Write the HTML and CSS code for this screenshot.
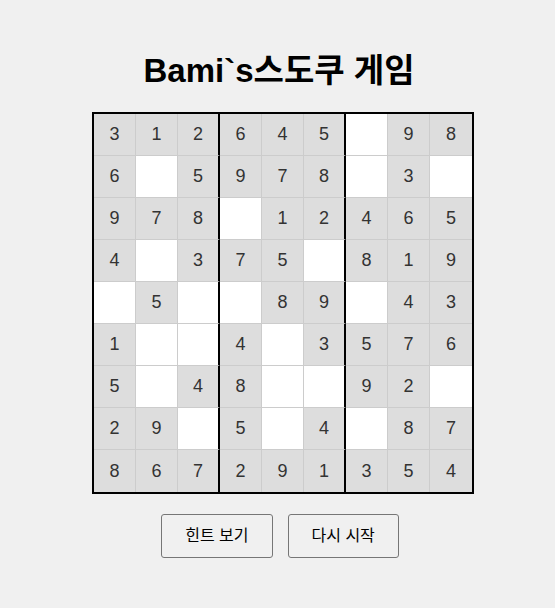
FILE: index.html
```html
<!DOCTYPE html>
<html lang="ko">
<head>
<meta charset="utf-8">
<title>Bami`s스도쿠 게임</title>
<link rel="stylesheet" href="styles.css">
</head>
<body>
<div class="page">
  <h1 class="title">Bami`s스도쿠 게임</h1>
  <div class="board" id="board"></div>
  <div class="actions">
    <button class="btn">힌트 보기</button>
    <button class="btn">다시 시작</button>
  </div>
</div>
<script src="app.js"></script>
</body>
</html>
```
FILE: styles.css
```css
html, body {
  margin: 0;
  padding: 0;
  background: #f0f0f0;
}
.page {
  display: flex;
  flex-direction: column;
  align-items: center;
  font-family: "Liberation Sans", Arial, "Noto Sans CJK KR", sans-serif;
  padding-top: 49px;
}
.title {
  margin: 0 0 19px 3px;
  font-size: 33px;
  font-weight: bold;
  line-height: 44px;
  color: #000;
}
.board {
  display: grid;
  grid-template-columns: repeat(9, 42px);
  grid-auto-rows: 42px;
  border: 2px solid #000;
  margin-left: 11px;
}
.cell {
  box-sizing: border-box;
  border-right: 1px solid #ccc;
  border-bottom: 1px solid #ccc;
  background: #fff;
  display: flex;
  align-items: center;
  justify-content: center;
  font-size: 18px;
  color: #333;
}
.cell.given {
  background: #ddd;
}
.cell.box-end {
  border-right: 2px solid #000;
}
.cell.last-col {
  border-right: none;
}
.cell.last-row {
  border-bottom: none;
}
.actions {
  display: flex;
  gap: 15px;
  margin-top: 20px;
  margin-left: 5px;
}
.btn {
  font-family: "Liberation Sans", Arial, "Noto Sans CJK KR", sans-serif;
  font-size: 16px;
  line-height: 22px;
  height: 44px;
  padding: 10px 23px;
  background: #f0f0f0;
  border: 1px solid #767676;
  border-radius: 3px;
  color: #000;
}
```
FILE: app.js
```js
var data = [
  "312645_98",
  "6_5978_3_",
  "978_12465",
  "4_375_819",
  "_5__89_43",
  "1__4_3576",
  "5_48__92_",
  "29_5_4_87",
  "867291354"
];
var board = document.getElementById('board');
for (var r = 0; r < 9; r++) {
  for (var c = 0; c < 9; c++) {
    var ch = data[r][c];
    var d = document.createElement('div');
    d.className = 'cell';
    if (ch !== '_') { d.className += ' given'; d.textContent = ch; }
    if (c === 2 || c === 5) d.className += ' box-end';
    if (c === 8) d.className += ' last-col';
    if (r === 8) d.className += ' last-row';
    board.appendChild(d);
  }
}
```
